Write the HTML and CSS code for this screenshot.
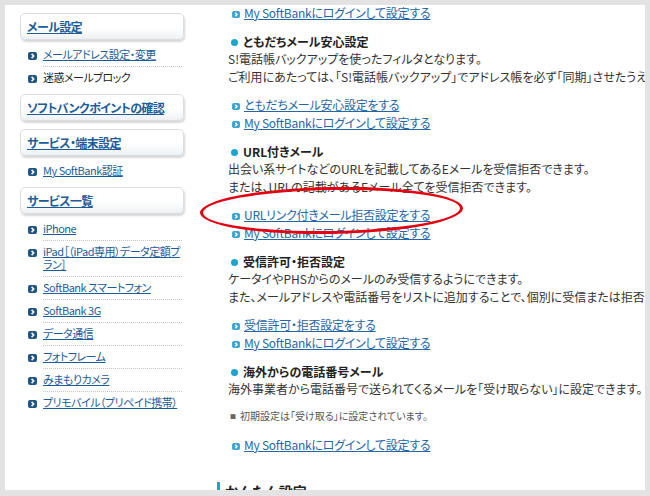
FILE: index.html
```html
<!DOCTYPE html>
<html lang="ja">
<head>
    <meta charset="UTF-8">
    <meta name="viewport" content="width=device-width, initial-scale=1.0">
    <title>迷惑メールブロック</title>
    <link rel="stylesheet" href="styles.css">
</head>
<body>
    <svg class="defs" width="0" height="0">
        <symbol id="arr" viewBox="0 0 9 8">
            <rect width="9" height="8" rx="2" fill="currentColor"/>
            <path d="M3.6 1.9 L5.7 4 L3.6 6.1" stroke="#fff" stroke-width="1.5" fill="none"/>
        </symbol>
    </svg>

    <div class="window">
        <div class="side">
            <h3 class="side-title"><a href="#">メール設定</a></h3>
            <ul class="side-list">
                <li><svg class="ic"><use href="#arr"/></svg><a href="#">メールアドレス設定・変更</a></li>
                <li><svg class="ic"><use href="#arr"/></svg>迷惑メールブロック</li>
            </ul>

            <h3 class="side-title"><a href="#">ソフトバンクポイントの確認</a></h3>

            <h3 class="side-title"><a href="#">サービス・端末設定</a></h3>
            <ul class="side-list">
                <li><svg class="ic"><use href="#arr"/></svg><a href="#">My SoftBank認証</a></li>
            </ul>

            <h3 class="side-title"><a href="#">サービス一覧</a></h3>
            <ul class="side-list">
                <li><svg class="ic"><use href="#arr"/></svg><a href="#">iPhone</a></li>
                <li><svg class="ic"><use href="#arr"/></svg><a href="#">iPad［（iPad専用）データ定額プラン］</a></li>
                <li><svg class="ic"><use href="#arr"/></svg><a href="#">SoftBank スマートフォン</a></li>
                <li><svg class="ic"><use href="#arr"/></svg><a href="#">SoftBank 3G</a></li>
                <li><svg class="ic"><use href="#arr"/></svg><a href="#">データ通信</a></li>
                <li><svg class="ic"><use href="#arr"/></svg><a href="#">フォトフレーム</a></li>
                <li><svg class="ic"><use href="#arr"/></svg><a href="#">みまもりカメラ</a></li>
                <li><svg class="ic"><use href="#arr"/></svg><a href="#">プリモバイル（プリペイド携帯）</a></li>
            </ul>
        </div>

        <div class="main">
            <div class="block">
                <ul class="links first">
                    <li><svg class="ic"><use href="#arr"/></svg><a href="#">My SoftBankにログインして設定する</a></li>
                </ul>
            </div>

            <div class="block">
                <h4>ともだちメール安心設定</h4>
                <p>S!電話帳バックアップを使ったフィルタとなります。<br>ご利用にあたっては、「S!電話帳バックアップ」でアドレス帳を必ず「同期」させたうえでご利用ください。</p>
                <ul class="links">
                    <li><svg class="ic"><use href="#arr"/></svg><a href="#">ともだちメール安心設定をする</a></li>
                    <li><svg class="ic"><use href="#arr"/></svg><a href="#">My SoftBankにログインして設定する</a></li>
                </ul>
            </div>

            <div class="block">
                <h4>URL付きメール</h4>
                <p>出会い系サイトなどのURLを記載してあるEメールを受信拒否できます。<br>または、URLの記載があるEメール全てを受信拒否できます。</p>
                <ul class="links">
                    <li><svg class="ic"><use href="#arr"/></svg><a href="#">URLリンク付きメール拒否設定をする</a></li>
                    <li><svg class="ic"><use href="#arr"/></svg><a href="#">My SoftBankにログインして設定する</a></li>
                </ul>
            </div>

            <div class="block">
                <h4>受信許可・拒否設定</h4>
                <p>ケータイやPHSからのメールのみ受信するようにできます。<br>また、メールアドレスや電話番号をリストに追加することで、個別に受信または拒否できます。</p>
                <ul class="links">
                    <li><svg class="ic"><use href="#arr"/></svg><a href="#">受信許可・拒否設定をする</a></li>
                    <li><svg class="ic"><use href="#arr"/></svg><a href="#">My SoftBankにログインして設定する</a></li>
                </ul>
            </div>

            <div class="block">
                <h4>海外からの電話番号メール</h4>
                <p>海外事業者から電話番号で送られてくるメールを「受け取らない」に設定できます。</p>
                <p class="note">初期設定は「受け取る」に設定されています。</p>
                <ul class="links">
                    <li><svg class="ic"><use href="#arr"/></svg><a href="#">My SoftBankにログインして設定する</a></li>
                </ul>
            </div>

            <h2 class="sub-title">かんたん設定</h2>
        </div>

        <div class="mark"></div>
    </div>
</body>
</html>
```

FILE: styles.css
```css
body {
    margin: 0;
    background: #e3e3e3;
    font-family: "Noto Sans CJK JP", sans-serif;
    font-feature-settings: "palt";
    color: #333;
}
a {
    color: #2566a6;
}
.defs {
    position: absolute;
    width: 0;
    height: 0;
}
.window {
    position: relative;
    margin: 5px;
    height: 485px;
    background: #fff;
    display: flex;
    overflow: hidden;
}

/* sidebar */
.side {
    width: 195px;
    flex-shrink: 0;
    box-sizing: border-box;
    padding: 4px 16px 0 15px;
    display: flex;
    flex-direction: column;
}
.side-title {
    margin: 4px 0;
    height: 27px;
    box-sizing: border-box;
    border: 1px solid #dadee2;
    border-radius: 5px;
    background: linear-gradient(#fff 55%, #eef1f4);
    box-shadow: 1px 2px 2px rgba(0, 0, 0, 0.16);
    padding-left: 6px;
    font-size: 12px;
    line-height: 25px;
    font-weight: bold;
    letter-spacing: -0.6px;
}
.side-title a {
    color: #1d5c98;
}
.side-list {
    margin: 0;
    padding: 0 2px 0 23px;
    list-style: none;
    font-size: 11px;
    line-height: 13px;
    letter-spacing: -0.5px;
    color: #222;
}
.side-list li {
    padding: 4px 0 5px;
    border-bottom: 1px dotted #c4c4c4;
}
.side-list li:last-child {
    border-bottom-color: transparent;
}
.side-list a {
    color: #1d5c98;
}
.side-list .ic {
    width: 9px;
    height: 8px;
    margin: 0 6px 0 -15px;
    vertical-align: -1px;
    color: #1f5584;
}

/* main column */
.main {
    flex: 1;
    min-width: 0;
    padding-left: 17px;
}
.block {
    padding-left: 11px;
}
.block h4 {
    margin: 11px 0 0;
    font-size: 12px;
    line-height: 17px;
    color: #222;
}
.block h4::before {
    content: "";
    display: inline-block;
    width: 7px;
    height: 7px;
    border-radius: 50%;
    background: #1ea3cd;
    margin: 0 5px 0 3px;
    vertical-align: 1px;
}
.block p {
    margin: 0;
    font-size: 12px;
    line-height: 18px;
    white-space: nowrap;
}
.block .note {
    margin-top: 9px;
    padding-left: 2px;
    font-size: 10px;
    color: #555;
}
.note::before {
    content: "■";
    font-size: 6px;
    color: #666;
    margin-right: 4px;
    vertical-align: 1px;
}
.links {
    list-style: none;
    margin: 10px 0 0;
    padding-left: 4px;
    font-size: 12px;
    line-height: 18px;
    letter-spacing: -0.25px;
    white-space: nowrap;
}
.links.first {
    margin-top: -1px;
}
.links .ic {
    width: 8px;
    height: 7px;
    margin-right: 4px;
    vertical-align: 0;
    color: #3aa6d0;
}
.sub-title {
    margin: 28px 0 0;
    border-left: 3px solid #1ea3cd;
    padding-left: 5px;
    font-size: 14px;
    line-height: 18px;
    color: #222;
}

/* annotation */
.mark {
    position: absolute;
    left: 195px;
    top: 182px;
    width: 263px;
    height: 47px;
    box-sizing: border-box;
    border: 3px solid #e3000f;
    border-radius: 50%;
    transform: rotate(-1deg);
}
```
